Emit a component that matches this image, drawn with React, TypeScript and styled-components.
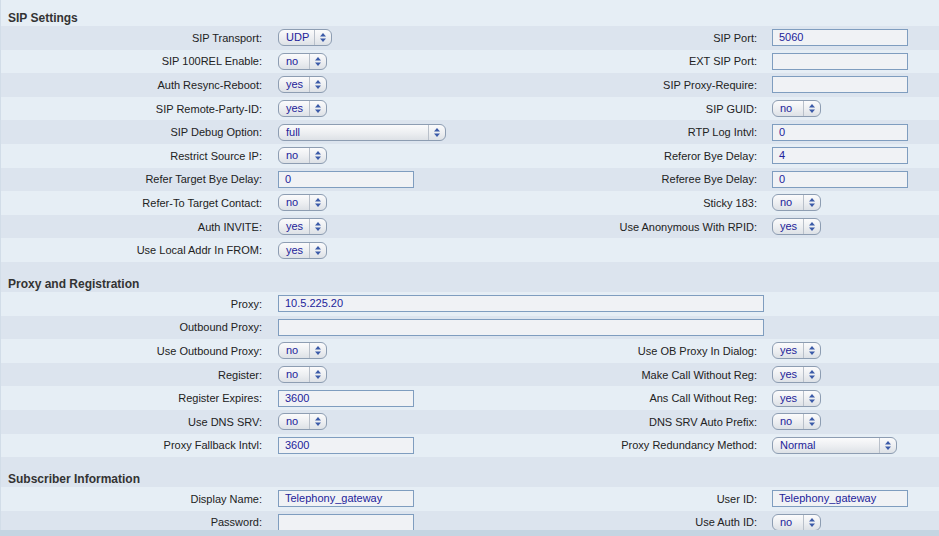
import React from "react";
import styled, { createGlobalStyle } from "styled-components";

const Global = createGlobalStyle`
  html, body { margin: 0; padding: 0; background: #c5d5e2; }
  body { font-family: "Liberation Sans", Arial, sans-serif; }
`;

const Frame = styled.div`
  width: 939px;
  height: 536px;
  display: flex;
  flex-direction: column;
  background: #c5d5e2;
`;

const Panel = styled.div`
  height: 530px;
  overflow: hidden;
  border-left: 1px solid #d2dde8;
  box-sizing: border-box;
`;

const Row = styled.div<{ $alt?: boolean }>`
  display: grid;
  grid-template-columns: 269px 230px 265px 1fr;
  align-items: center;
  height: 23.6px;
  background: ${(p) => (p.$alt ? "#dce4ee" : "#e6eef5")};
`;

const HeaderRow = styled.div<{ $alt?: boolean; $h: number }>`
  display: flex;
  align-items: flex-end;
  height: ${(p) => p.$h}px;
  padding: 0 0 1px 7px;
  box-sizing: border-box;
  background: ${(p) => (p.$alt ? "#dce4ee" : "#e6eef5")};
  font-size: 12px;
  font-weight: bold;
  color: #333;
`;

const Label = styled.div`
  text-align: right;
  padding-right: 8px;
  font-size: 11px;
  color: #222;
  white-space: nowrap;
`;

const Cell = styled.div<{ $span?: number; $pad?: number }>`
  display: flex;
  align-items: center;
  padding-left: ${(p) => p.$pad ?? 8}px;
  grid-column: span ${(p) => p.$span ?? 1};
`;

const TextInput = styled.div<{ $w: number }>`
  width: ${(p) => p.$w}px;
  height: 17px;
  box-sizing: border-box;
  border: 1px solid #7f9dbf;
  background: #f0f2f5;
  padding-left: 6px;
  font-size: 11px;
  line-height: 15px;
  color: #23239a;
  white-space: nowrap;
  overflow: hidden;
`;

const SelectBox = styled.div<{ $w: number }>`
  width: ${(p) => p.$w}px;
  height: 17px;
  box-sizing: border-box;
  display: flex;
  border: 1px solid #8d9db2;
  border-radius: 6px;
  background: linear-gradient(#fbfbfc, #eceef1 55%, #dde1e6);
  font-size: 11px;
  color: #23239a;
`;

const SelectValue = styled.div`
  flex: 1;
  padding-left: 7px;
  line-height: 15px;
  white-space: nowrap;
`;

const SelectArrow = styled.div`
  width: 16px;
  border-left: 1px solid #b9c0ca;
  display: flex;
  align-items: center;
  justify-content: center;
`;

const Arrows = () => (
  <svg width="6" height="9" viewBox="0 0 6 9">
    <path d="M3 0 L6 3.5 L0 3.5 Z" fill="#3b5aa8" />
    <path d="M3 9 L6 5.5 L0 5.5 Z" fill="#3b5aa8" />
  </svg>
);

type Ctrl =
  | { t: "in"; v?: string; w?: number }
  | { t: "sel"; v: string; w?: number }
  | null;

const Control = ({ c }: { c: Ctrl }) => {
  if (!c) return null;
  if (c.t === "in") return <TextInput $w={c.w ?? 136}>{c.v ?? ""}</TextInput>;
  return (
    <SelectBox $w={c.w ?? 49}>
      <SelectValue>{c.v}</SelectValue>
      <SelectArrow>
        <Arrows />
      </SelectArrow>
    </SelectBox>
  );
};

type RowDef = [string, Ctrl, string?, Ctrl?];

const sel = (v: string, w?: number): Ctrl => ({ t: "sel", v, w });
const inp = (v?: string, w?: number): Ctrl => ({ t: "in", v, w });

const sip: RowDef[] = [
  ["SIP Transport:", sel("UDP", 54), "SIP Port:", inp("5060")],
  ["SIP 100REL Enable:", sel("no"), "EXT SIP Port:", inp()],
  ["Auth Resync-Reboot:", sel("yes"), "SIP Proxy-Require:", inp()],
  ["SIP Remote-Party-ID:", sel("yes"), "SIP GUID:", sel("no")],
  ["SIP Debug Option:", sel("full", 168), "RTP Log Intvl:", inp("0")],
  ["Restrict Source IP:", sel("no"), "Referor Bye Delay:", inp("4")],
  ["Refer Target Bye Delay:", inp("0"), "Referee Bye Delay:", inp("0")],
  ["Refer-To Target Contact:", sel("no"), "Sticky 183:", sel("no")],
  ["Auth INVITE:", sel("yes"), "Use Anonymous With RPID:", sel("yes")],
  ["Use Local Addr In FROM:", sel("yes")],
];

const proxy: RowDef[] = [
  ["Use Outbound Proxy:", sel("no"), "Use OB Proxy In Dialog:", sel("yes")],
  ["Register:", sel("no"), "Make Call Without Reg:", sel("yes")],
  ["Register Expires:", inp("3600"), "Ans Call Without Reg:", sel("yes")],
  ["Use DNS SRV:", sel("no"), "DNS SRV Auto Prefix:", sel("no")],
  ["Proxy Fallback Intvl:", inp("3600"), "Proxy Redundancy Method:", sel("Normal", 125)],
];

const subscriber: RowDef[] = [
  ["Display Name:", inp("Telephony_gateway"), "User ID:", inp("Telephony_gateway")],
  ["Password:", inp(), "Use Auth ID:", sel("no")],
];

const FormRow = ({ d, alt }: { d: RowDef; alt: boolean }) => (
  <Row $alt={alt}>
    <Label>{d[0]}</Label>
    <Cell>
      <Control c={d[1]} />
    </Cell>
    <Label>{d[2] ?? ""}</Label>
    <Cell $pad={7}>
      <Control c={d[3] ?? null} />
    </Cell>
  </Row>
);

const WideRow = ({ label, value, alt }: { label: string; value?: string; alt: boolean }) => (
  <Row $alt={alt}>
    <Label>{label}</Label>
    <Cell $span={2}>
      <TextInput $w={486}>{value ?? ""}</TextInput>
    </Cell>
    <Cell />
  </Row>
);

export default function App() {
  return (
    <>
      <Global />
      <Frame>
        <Panel>
          <HeaderRow $h={26}>SIP Settings</HeaderRow>
          {sip.map((d, i) => (
            <FormRow key={d[0]} d={d} alt={i % 2 === 0} />
          ))}
          <HeaderRow $alt $h={30}>Proxy and Registration</HeaderRow>
          <WideRow label="Proxy:" value="10.5.225.20" alt={false} />
          <WideRow label="Outbound Proxy:" alt={true} />
          {proxy.map((d, i) => (
            <FormRow key={d[0]} d={d} alt={i % 2 === 1} />
          ))}
          <HeaderRow $alt $h={30}>Subscriber Information</HeaderRow>
          {subscriber.map((d, i) => (
            <FormRow key={d[0]} d={d} alt={i % 2 === 1} />
          ))}
        </Panel>
      </Frame>
    </>
  );
}
